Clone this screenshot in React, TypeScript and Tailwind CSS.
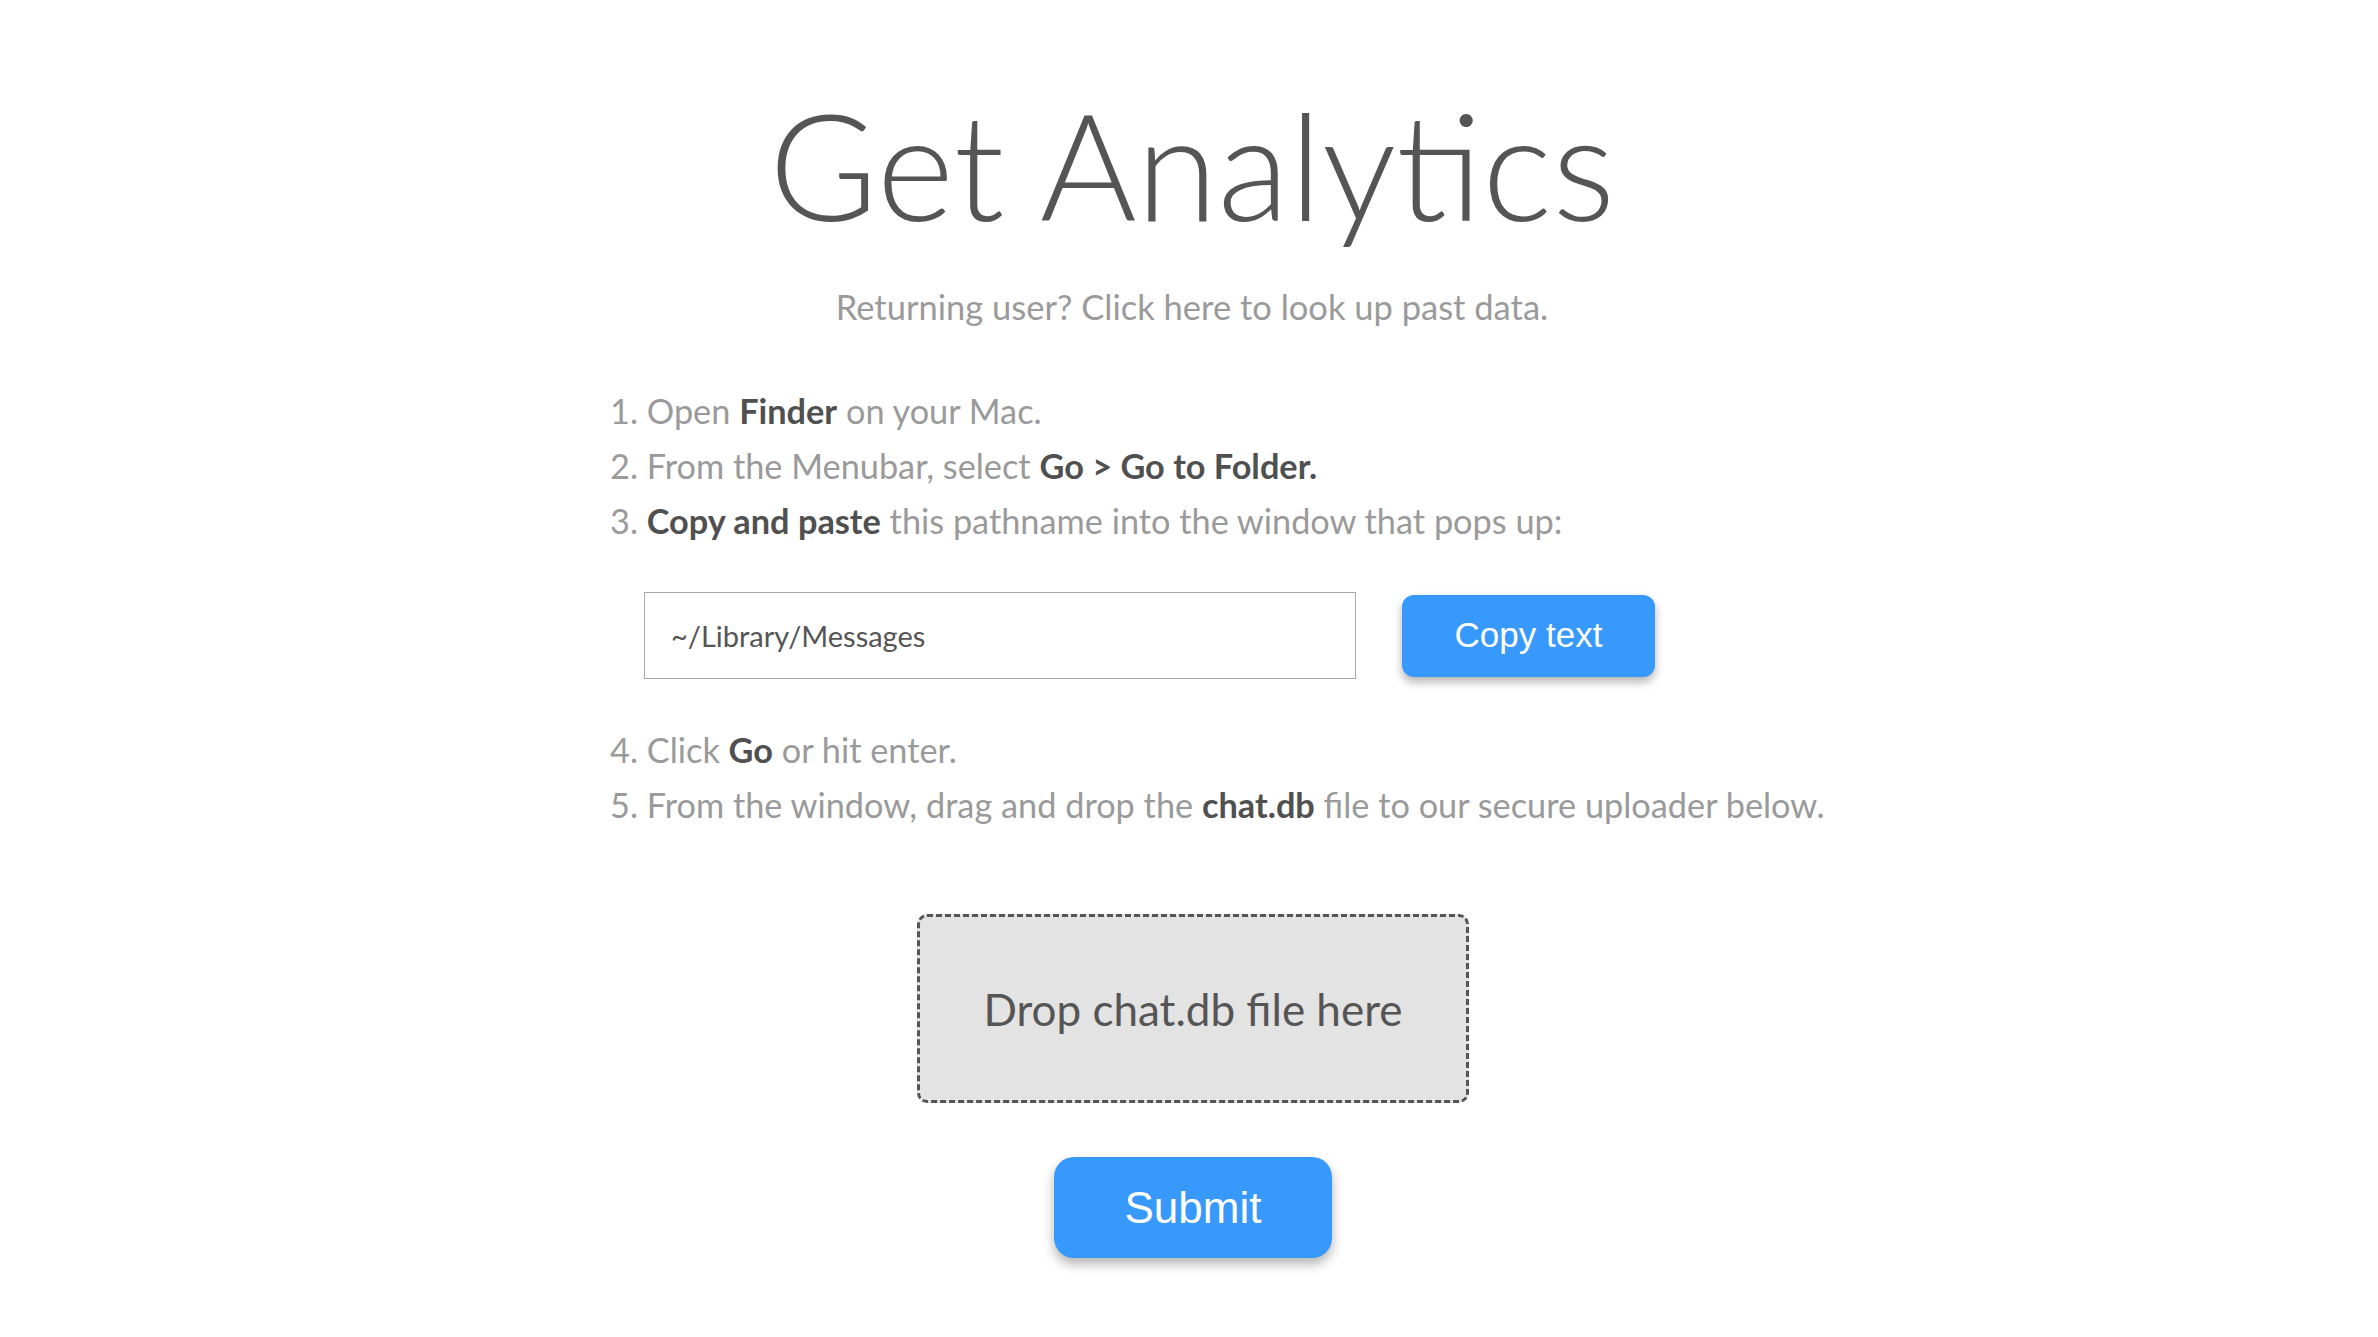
import React from "react";

export default function App() {
  return (
    <div className="min-h-screen w-full bg-white" style={{ fontFamily: "Lato, 'Liberation Sans', sans-serif" }}>
      <div className="w-[1160px] mx-auto flex flex-col pl-[1px]">
        <h1 className="mt-[90px] text-center text-[148px] leading-none font-light text-[#555555] ml-[5px]">Get Analytics</h1>
        <p className="mt-[49px] text-center text-[34.5px] leading-[40px] text-[#9a9a9a] ml-[5px]">
          Returning user? Click here to look up past data.
        </p>
        <div className="mt-[56px] text-[34.3px] leading-[55px] text-[#9a9a9a] whitespace-nowrap">
          <div>
            1. Open <span className="font-bold text-[#505050]">Finder</span> on your Mac.
          </div>
          <div>
            2. From the Menubar, select <span className="font-bold text-[#505050]">Go &gt; Go to Folder.</span>
          </div>
          <div>
            3. <span className="font-bold text-[#505050]">Copy and paste</span> this pathname into the window that pops up:
          </div>
        </div>
        <div className="mt-[44px] pl-[34px] flex items-center gap-[46px]">
          <div className="w-[712px] h-[87px] border border-[#a9a9a9] flex items-center px-[26px] text-[29px] text-[#555555]">
            ~/Library/Messages
          </div>
          <button
            className="w-[253px] h-[82px] rounded-[12px] bg-[#3899fd] text-white text-[35px] shadow-[0_5px_10px_rgba(0,0,0,0.3)]"
            style={{ fontFamily: "'Liberation Sans', Arial, sans-serif" }}
          >
            Copy text
          </button>
        </div>
        <div className="mt-[43px] text-[34.3px] leading-[55px] text-[#9a9a9a] whitespace-nowrap">
          <div>
            4. Click <span className="font-bold text-[#505050]">Go</span> or hit enter.
          </div>
          <div>
            5. From the window, drag and drop the <span className="font-bold text-[#505050]">chat.db</span> file to our secure uploader below.
          </div>
        </div>
        <div className="mt-[82px] self-center ml-[7px] w-[552px] h-[189px] rounded-[10px] border-[3px] border-dashed border-[#555555] bg-[#e3e3e3] flex items-center justify-center text-[44px] text-[#555555]">
          Drop chat.db file here
        </div>
        <button
          className="mt-[54px] self-center ml-[7px] w-[278px] h-[101px] rounded-[20px] bg-[#3899fd] text-white text-[44px] shadow-[0_6px_12px_rgba(0,0,0,0.3)]"
          style={{ fontFamily: "'Liberation Sans', Arial, sans-serif" }}
        >
          Submit
        </button>
      </div>
    </div>
  );
}
